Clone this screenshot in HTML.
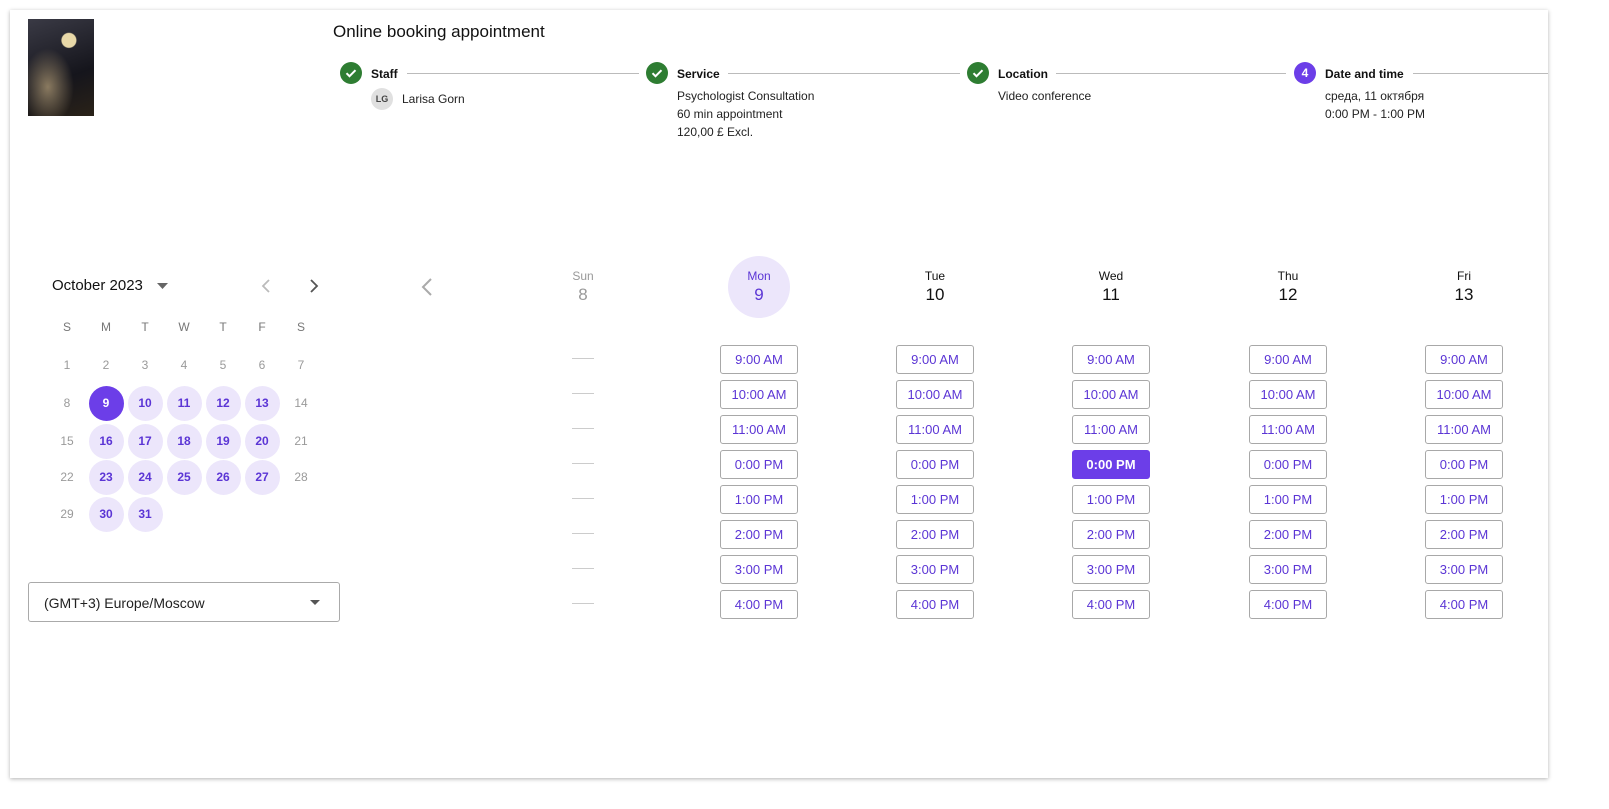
<!DOCTYPE html>
<html><head><meta charset="utf-8"><style>
*{box-sizing:border-box;margin:0;padding:0}
body{width:1609px;height:809px;background:#fff;font-family:"Liberation Sans",Arial,sans-serif;position:relative;overflow:hidden;color:#1a1a2e}
.card{position:absolute;left:10px;top:10px;width:1538px;height:768px;background:#fff;box-shadow:0 1px 4px rgba(0,0,0,.3)}
.abs{position:absolute}
.img{left:28px;top:19px;width:66px;height:97px;background:radial-gradient(circle at 62% 22%,#e8d8a8 0 7px,transparent 8px),radial-gradient(ellipse at 30% 70%,#8a7a60 0,transparent 40%),linear-gradient(160deg,#3a3a45,#15151c 60%,#2a2218)}
.title{left:333px;top:22px;font-size:17px;color:#111}
.chk{width:22px;height:22px;border-radius:50%;background:#2e7d32;display:flex;align-items:center;justify-content:center}
.num{width:22px;height:22px;border-radius:50%;background:#6c3ee8;color:#fff;font-size:12px;font-weight:bold;display:flex;align-items:center;justify-content:center}
.sl{font-size:12px;font-weight:bold;color:#111}
.line{height:1px;background:#bbb}
.st{font-size:12px;color:#222;line-height:18px}
.cd{position:absolute;width:35px;height:35px;margin-left:-17.5px;margin-top:-17.5px;border-radius:50%;display:flex;align-items:center;justify-content:center;font-size:12px;color:#9a9a9a}
.cd.a{background:#ece6fb;color:#5b35d5;font-weight:bold}
.cd.s{background:#6c3ee8;color:#fff;font-weight:bold}
.cd.h{color:#777}
.dh{position:absolute;width:70px;margin-left:-35px;text-align:center}
.dh .n{font-size:12px}.dh .d{font-size:17px;margin-top:2px}
.btn{position:absolute;width:78px;height:29px;border:1px solid #a8a8a8;border-radius:3px;color:#5b35d5;font-size:13px;display:flex;align-items:center;justify-content:center;background:#fff}
.btn.s{background:#6c3ee8;border-color:#6c3ee8;color:#fff;font-weight:bold}
.dash{position:absolute;width:22px;height:1px;background:#ccc}
</style></head><body>
<div class="card"></div>
<div class="abs img"></div>
<div class="abs title">Online booking appointment</div>

<div class="abs chk" style="left:340px;top:62px"><svg width="14" height="14" viewBox="0 0 14 14"><path d="M2.5 7.2l3 3 6-6" stroke="#fff" stroke-width="2" fill="none"/></svg></div>
<div class="abs sl" style="left:371px;top:67px">Staff</div>
<div class="abs line" style="left:407px;top:73px;width:232px"></div>
<div class="abs" style="left:371px;top:88px;width:22px;height:22px;border-radius:50%;background:#e0e0e0;font-size:9px;font-weight:bold;color:#444;display:flex;align-items:center;justify-content:center">LG</div>
<div class="abs st" style="left:402px;top:90px">Larisa Gorn</div>

<div class="abs chk" style="left:646px;top:62px"><svg width="14" height="14" viewBox="0 0 14 14"><path d="M2.5 7.2l3 3 6-6" stroke="#fff" stroke-width="2" fill="none"/></svg></div>
<div class="abs sl" style="left:677px;top:67px">Service</div>
<div class="abs line" style="left:728px;top:73px;width:232px"></div>
<div class="abs st" style="left:677px;top:87px">Psychologist Consultation<br>60 min appointment<br>120,00 £ Excl.</div>

<div class="abs chk" style="left:967px;top:62px"><svg width="14" height="14" viewBox="0 0 14 14"><path d="M2.5 7.2l3 3 6-6" stroke="#fff" stroke-width="2" fill="none"/></svg></div>
<div class="abs sl" style="left:998px;top:67px">Location</div>
<div class="abs line" style="left:1056px;top:73px;width:230px"></div>
<div class="abs st" style="left:998px;top:87px">Video conference</div>

<div class="abs num" style="left:1294px;top:62px">4</div>
<div class="abs sl" style="left:1325px;top:67px">Date and time</div>
<div class="abs line" style="left:1413px;top:73px;width:135px"></div>
<div class="abs st" style="left:1325px;top:87px">среда, 11 октября<br>0:00 PM - 1:00 PM</div>

<div class="abs" style="left:52px;top:277px;font-size:15px;color:#111">October 2023</div>
<svg class="abs" style="left:157px;top:283px" width="11" height="6"><path d="M0 0h11L5.5 6z" fill="#666"/></svg>
<svg class="abs" style="left:261px;top:279px" width="10" height="14"><path d="M8 1L2 7l6 6" stroke="#bbb" stroke-width="1.8" fill="none"/></svg>
<svg class="abs" style="left:309px;top:279px" width="10" height="14"><path d="M2 1l6 6-6 6" stroke="#555" stroke-width="1.8" fill="none"/></svg>

<div id="cal"></div>

<div class="abs" style="left:28px;top:582px;width:312px;height:40px;border:1px solid #aaa;border-radius:3px"></div>
<div class="abs" style="left:44px;top:595px;font-size:14px;color:#222">(GMT+3) Europe/Moscow</div>
<svg class="abs" style="left:310px;top:600px" width="10" height="5"><path d="M0 0h10L5 5z" fill="#555"/></svg>

<svg class="abs" style="left:420px;top:277px" width="14" height="20"><path d="M11 2L3 10l8 8" stroke="#aaa" stroke-width="2" fill="none"/></svg>
<div class="abs" style="left:728px;top:256px;width:62px;height:62px;border-radius:50%;background:#ece6fb"></div>
<div id="wk"></div>

<script>
var h='';
var cx=[67,106,145,184,223,262,301];
'SMTWTFS'.split('').forEach(function(l,i){h+='<div class="cd h" style="left:'+cx[i]+'px;top:327px">'+l+'</div>'});
var ry=[365,403,441,477,514];
for(var d=1;d<=31;d++){var p=d-1,r=Math.floor(p/7),c=p%7;var cl='';
if(d==9)cl='s';else if(d>=9&&c>=1&&c<=5)cl='a';
h+='<div class="cd '+cl+'" style="left:'+cx[c]+'px;top:'+ry[r]+'px">'+d+'</div>'}
document.getElementById('cal').innerHTML=h;
var w='';var names=['Sun','Mon','Tue','Wed','Thu','Fri'],ds=[8,9,10,11,12,13],xs=[583,759,935,1111,1288,1464];
var times=['9:00 AM','10:00 AM','11:00 AM','0:00 PM','1:00 PM','2:00 PM','3:00 PM','4:00 PM'];
names.forEach(function(n,i){var col=i==0?'#999':(i==1?'#5b35d5':'#111');
w+='<div class="dh" style="left:'+xs[i]+'px;top:269px;color:'+col+'"><div class="n">'+n+'</div><div class="d">'+ds[i]+'</div></div>';
times.forEach(function(t,j){var y=345+j*35;
if(i==0)w+='<div class="dash" style="left:572px;top:'+(y+13)+'px"></div>';
else w+='<div class="btn'+(i==3&&j==3?' s':'')+'" style="left:'+(xs[i]-39)+'px;top:'+y+'px">'+t+'</div>';});});
document.getElementById('wk').innerHTML=w;
</script>
</body></html>
